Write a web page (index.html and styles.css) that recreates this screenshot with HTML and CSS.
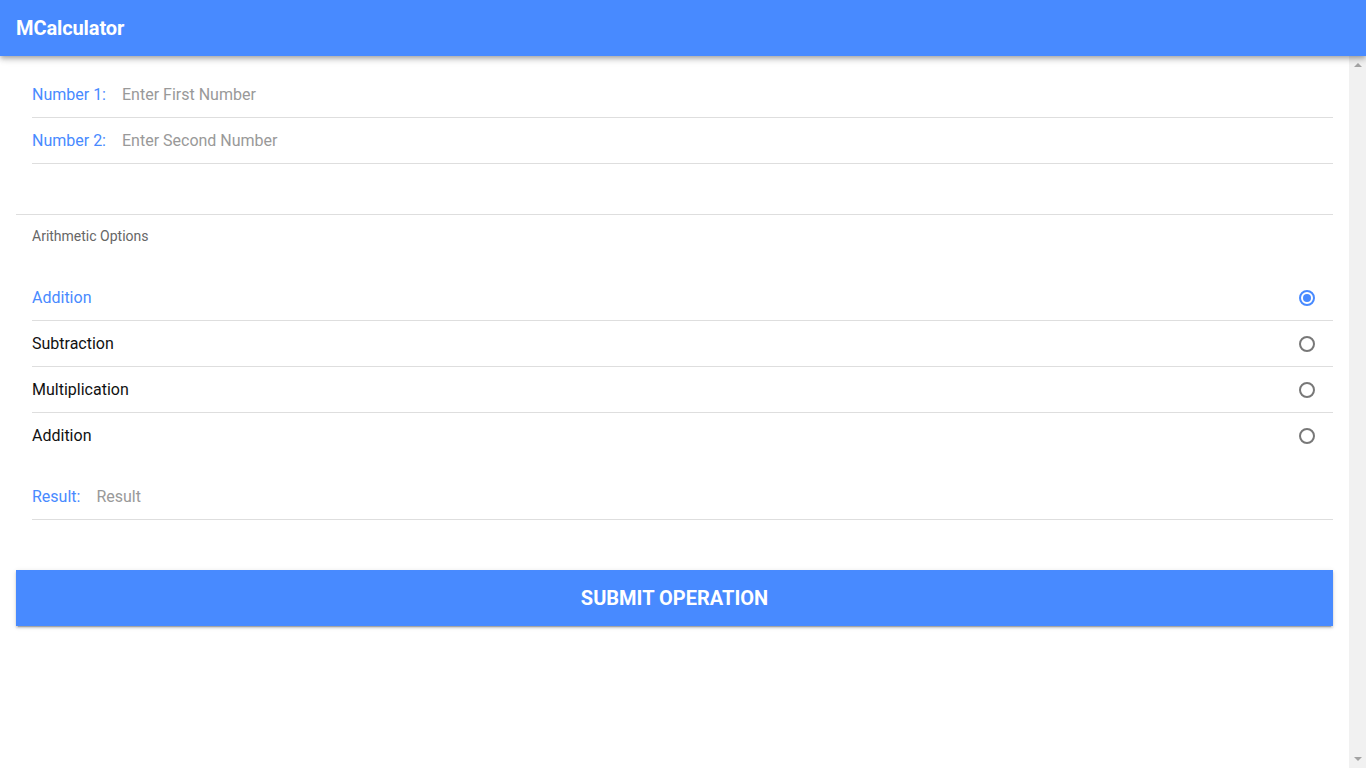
FILE: index.html
```html
<!DOCTYPE html>
<html lang="en">
<head>
<meta charset="utf-8">
<title>MCalculator</title>
<link rel="stylesheet" href="styles.css">
</head>
<body>
<div class="app">
  <header class="toolbar">
    <div class="title">MCalculator</div>
  </header>
  <div class="body">
    <main class="content">
      <div class="list">
        <label class="item">
          <div class="item-inner">
            <span class="label">Number 1:</span>
            <input class="input" type="text" placeholder="Enter First Number">
          </div>
        </label>
        <label class="item">
          <div class="item-inner">
            <span class="label">Number 2:</span>
            <input class="input" type="text" placeholder="Enter Second Number">
          </div>
        </label>
      </div>

      <div class="radio-group">
        <div class="list-header">Arithmetic Options</div>
        <div class="item radio-item">
          <div class="item-inner">
            <span class="radio-label active">Addition</span>
            <span class="radio checked"><span class="dot"></span></span>
          </div>
        </div>
        <div class="item radio-item">
          <div class="item-inner">
            <span class="radio-label">Subtraction</span>
            <span class="radio"></span>
          </div>
        </div>
        <div class="item radio-item">
          <div class="item-inner">
            <span class="radio-label">Multiplication</span>
            <span class="radio"></span>
          </div>
        </div>
        <div class="item radio-item last">
          <div class="item-inner">
            <span class="radio-label">Addition</span>
            <span class="radio"></span>
          </div>
        </div>
      </div>

      <div class="list result-list">
        <label class="item">
          <div class="item-inner">
            <span class="label">Result:</span>
            <input class="input" type="text" placeholder="Result">
          </div>
        </label>
      </div>

      <button class="submit" type="button">Submit Operation</button>
    </main>
    <div class="scrollbar" aria-hidden="true">
      <span class="arrow up"></span>
      <span class="arrow down"></span>
    </div>
  </div>
</div>
</body>
</html>
```
FILE: styles.css
```css
* {
  box-sizing: border-box;
}

html, body {
  margin: 0;
  padding: 0;
  height: 100%;
  overflow: hidden;
  font-family: Roboto, "Liberation Sans", sans-serif;
  background: #fff;
}

.app {
  display: flex;
  flex-direction: column;
  height: 100vh;
}

.toolbar {
  flex: 0 0 56px;
  height: 56px;
  background: #488aff;
  display: flex;
  align-items: center;
  padding: 0 16px;
  box-shadow: 0 2px 4px -1px rgba(0, 0, 0, 0.2), 0 4px 5px 0 rgba(0, 0, 0, 0.14), 0 1px 10px 0 rgba(0, 0, 0, 0.12);
  position: relative;
  z-index: 2;
}

.title {
  color: #fff;
  font-size: 20px;
  font-weight: 700;
  letter-spacing: -0.1px;
}

.body {
  flex: 1 1 auto;
  display: flex;
  min-height: 0;
}

.content {
  flex: 1 1 auto;
  padding: 16px;
  overflow: hidden;
}

.scrollbar {
  flex: 0 0 17px;
  background: #f1f1f1;
  display: flex;
  flex-direction: column;
  justify-content: space-between;
  align-items: center;
  padding: 7px 0 7px 0;
}

.arrow {
  width: 0;
  height: 0;
  border-left: 4px solid transparent;
  border-right: 4px solid transparent;
}

.arrow.up {
  border-bottom: 4px solid #a3a3a3;
}

.arrow.down {
  border-top: 4px solid #a3a3a3;
}

.list {
  margin: 0;
}

.item {
  display: block;
  padding-left: 16px;
}

.item-inner {
  height: 46px;
  display: flex;
  align-items: center;
  border-bottom: 1px solid #dedede;
  padding-right: 18px;
}

.label {
  color: #488aff;
  font-size: 16px;
  margin-right: 16px;
  white-space: nowrap;
}

.input {
  flex: 1;
  border: 0;
  outline: none;
  font-family: inherit;
  font-size: 16px;
  padding: 0;
  color: #000;
  background: transparent;
}

.input::placeholder {
  color: #999;
}

.radio-group {
  margin-top: 50px;
  border-top: 1px solid #dedede;
}

.list-header {
  height: 60px;
  padding: 13px 0 0 16px;
  font-size: 14px;
  line-height: 17px;
  color: #666;
}

.radio-item .item-inner {
  justify-content: space-between;
}

.radio-item.last .item-inner {
  border-bottom: 0;
  height: 45px;
}

.radio-label {
  font-size: 16px;
  color: #111;
}

.radio-label.active {
  color: #488aff;
}

.radio {
  width: 16px;
  height: 16px;
  border: 2px solid #787878;
  border-radius: 50%;
  display: flex;
  align-items: center;
  justify-content: center;
}

.radio.checked {
  border-color: #488aff;
}

.radio .dot {
  width: 8px;
  height: 8px;
  border-radius: 50%;
  background: #488aff;
}

.result-list {
  margin-top: 16px;
}

.submit {
  display: block;
  width: 100%;
  height: 56px;
  margin-top: 50px;
  border: 0;
  background: #488aff;
  color: #fff;
  font-family: inherit;
  font-size: 20px;
  font-weight: 700;
  text-transform: uppercase;
  box-shadow: 0 2px 2px 0 rgba(0, 0, 0, 0.14), 0 3px 1px -2px rgba(0, 0, 0, 0.2), 0 1px 5px 0 rgba(0, 0, 0, 0.12);
  cursor: pointer;
}
```
